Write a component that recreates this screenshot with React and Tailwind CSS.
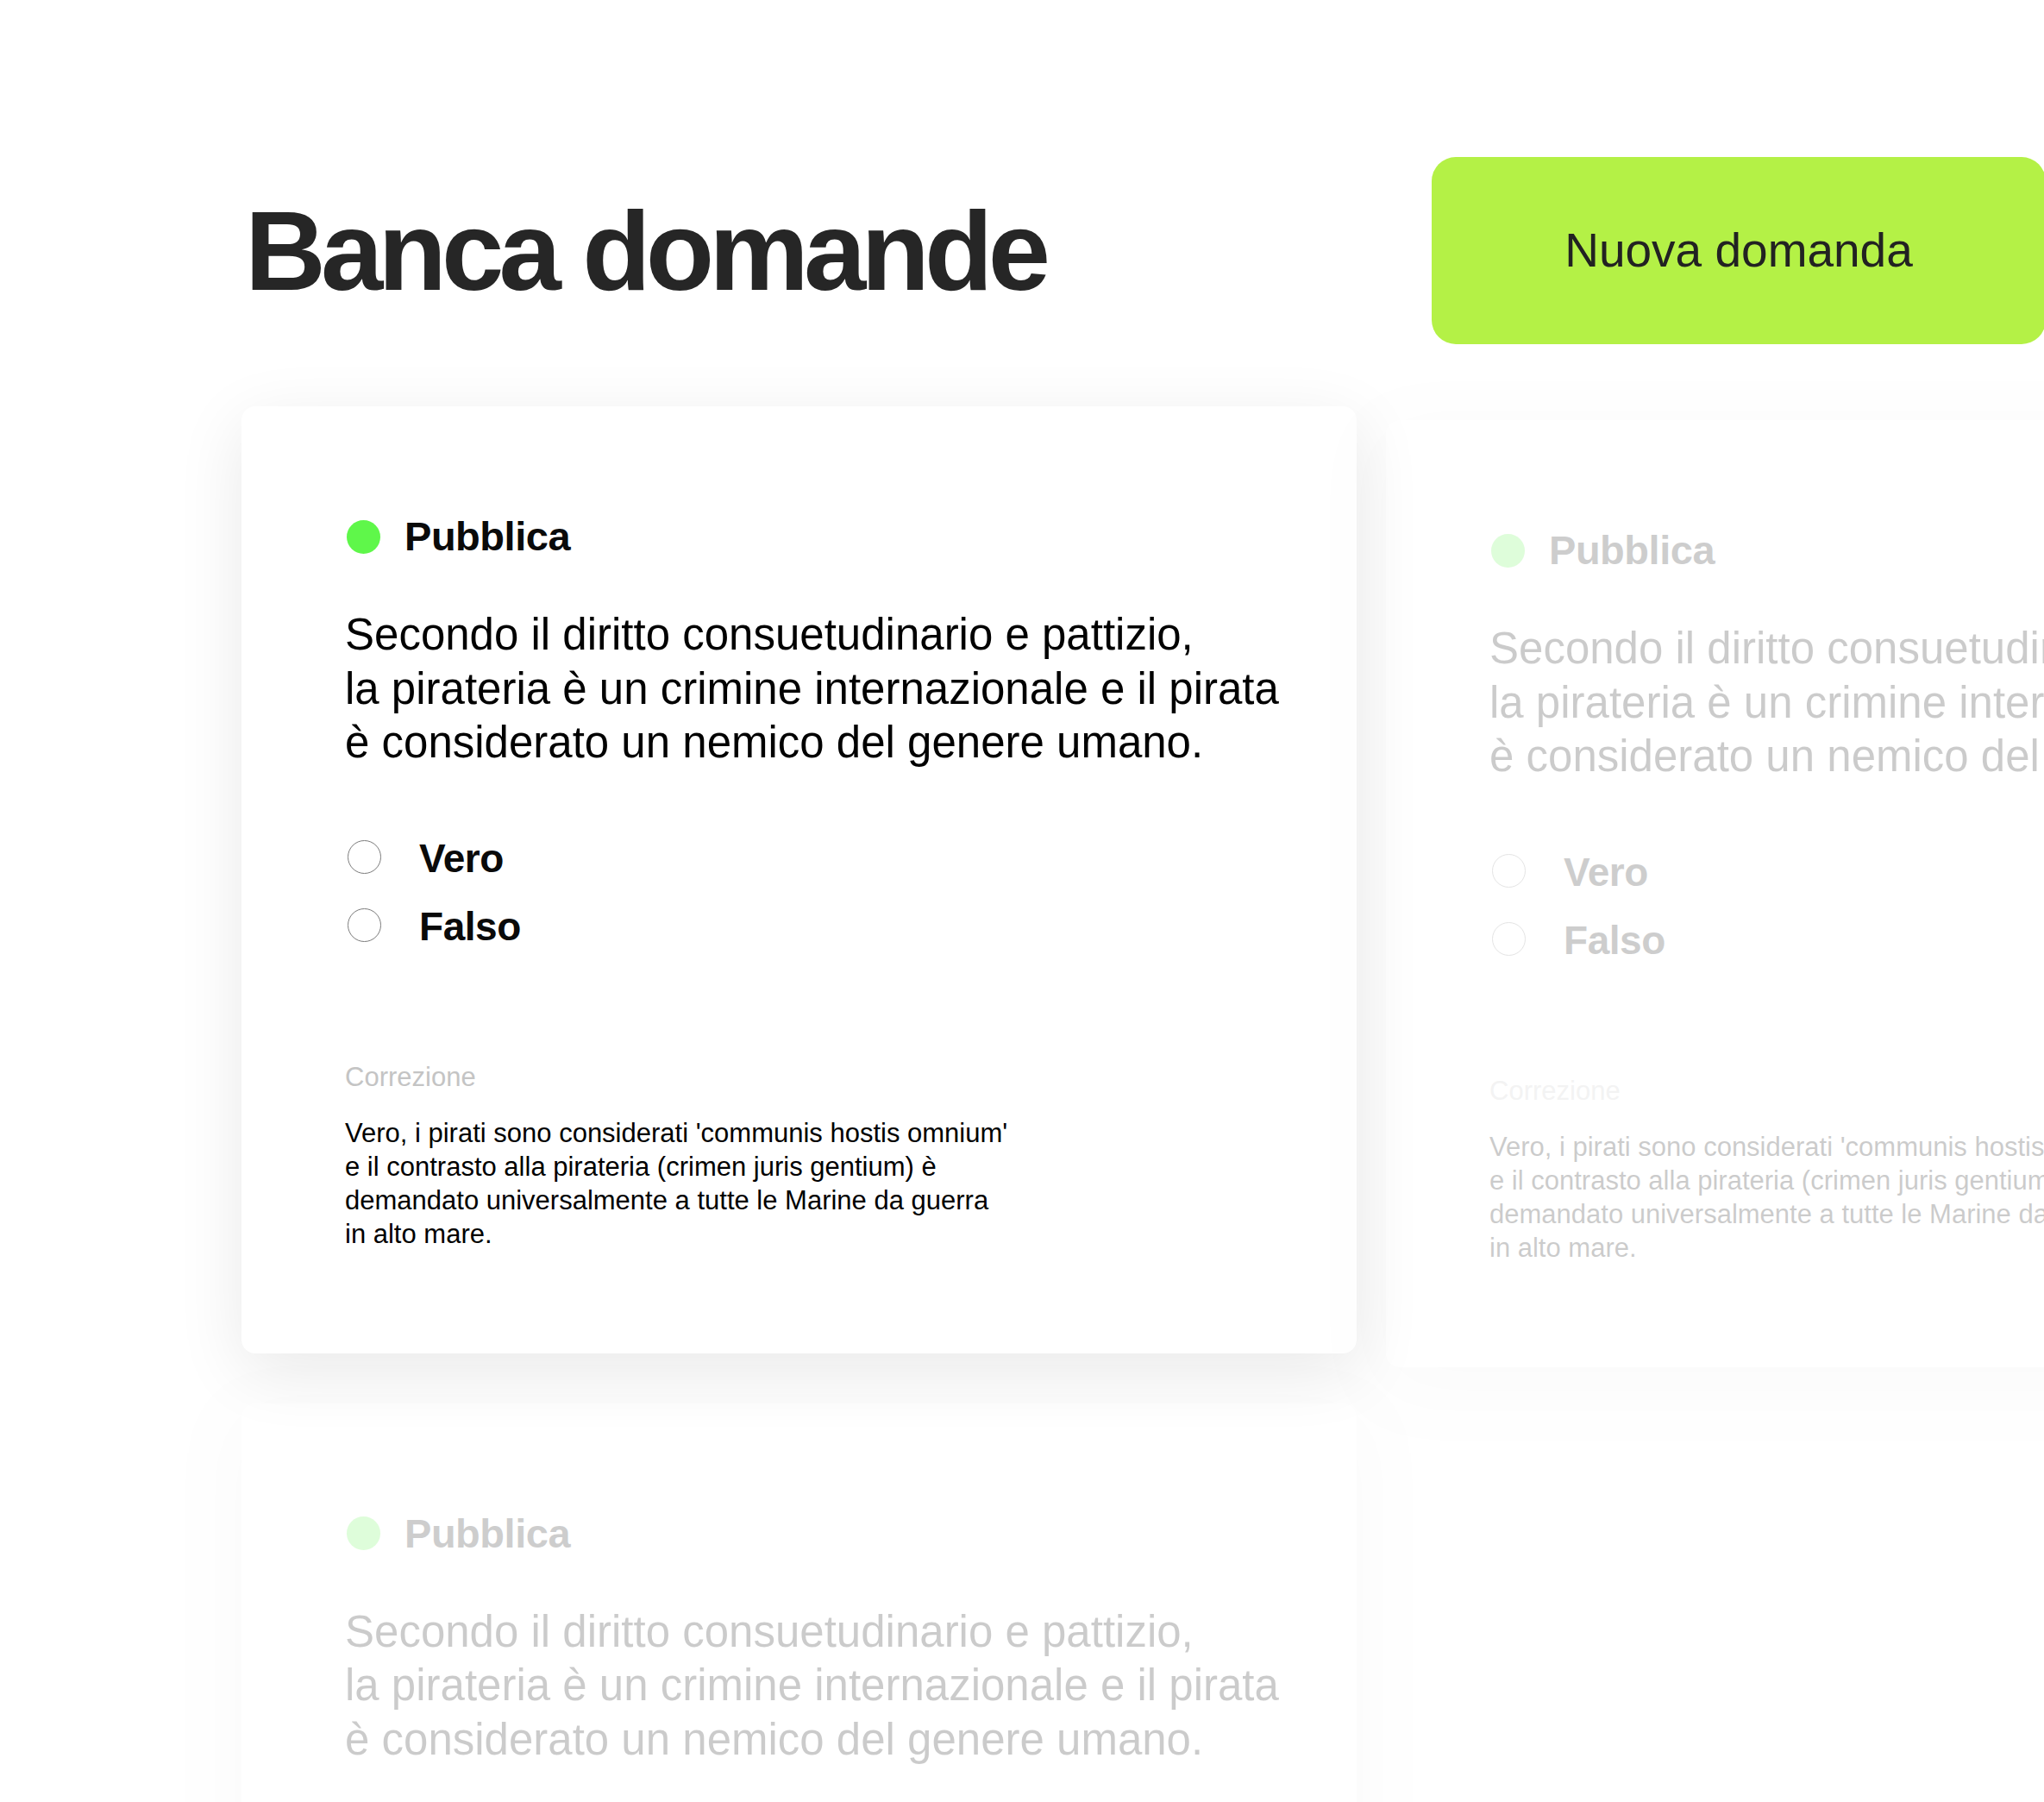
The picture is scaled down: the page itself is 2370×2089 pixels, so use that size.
import React from 'react'

const font = { fontFamily: '"Liberation Sans", Arial, sans-serif' }

function Radio({ label }) {
  return (
    <div className="flex items-center h-[40px]">
      <span className="ml-[3px] w-[39px] h-[39px] rounded-full border-[1.5px] border-[#7c7c7c] shrink-0" />
      <span className="ml-[44px] text-[46px] leading-[40px] font-bold tracking-[-0.01em] text-[#0a0a0a] pt-[2px]">{label}</span>
    </div>
  )
}

function QuestionCard({ faded }) {
  return (
    <div className={`w-[1293px] shrink-0 rounded-[16px] bg-white shadow-[0_20px_80px_rgba(0,0,0,0.09)] ${faded ? 'opacity-20' : ''}`}>
      <div className="pl-[120px] pt-[127px] pb-[119px]">
        {/* stato */}
        <div className="flex items-center h-[48px]">
          <span className="ml-[2px] w-[39px] h-[39px] rounded-full bg-[#5ff74a]" />
          <span className="ml-[28px] text-[47px] leading-[48px] font-bold tracking-[-0.01em] text-[#0a0a0a]">Pubblica</span>
        </div>

        <p className="mt-[59px] text-[51px] leading-[62.5px] text-black">
          Secondo il diritto consuetudinario e pattizio,
          <br />
          la pirateria è un crimine internazionale e il pirata
          <br />
          è considerato un nemico del genere umano.
        </p>

        <div className="mt-[81px] flex flex-col gap-[39px]">
          <Radio label="Vero" />
          <Radio label="Falso" />
        </div>

        <div className="mt-[138px] text-[31px] leading-[36px] text-[#c4c4c4]">Correzione</div>
        <p className="mt-[27px] text-[31px] leading-[39px] text-black">
          Vero, i pirati sono considerati 'communis hostis omnium'
          <br />
          e il contrasto alla pirateria (crimen juris gentium) è
          <br />
          demandato universalmente a tutte le Marine da guerra
          <br />
          in alto mare.
        </p>
      </div>
    </div>
  )
}

export default function App() {
  return (
    <div className="w-full h-[2089px] overflow-hidden bg-white" style={font}>
      {/* header */}
      <div className="flex items-center pt-[182px] pl-[280px]">
        <div className="w-[1380px] shrink-0 pl-[4px]">
          <h1 className="text-[130px] leading-[130px] font-bold tracking-[-0.045em] text-[#262626]">Banca domande</h1>
        </div>
        <button className="w-[712px] h-[217px] shrink-0 rounded-[28px] bg-[#b4f146] text-[55px] text-[#222222]">
          Nuova domanda
        </button>
      </div>

      {/* griglia domande */}
      <div className="mt-[72px] pl-[280px] flex gap-[34px]">
        <div className="flex flex-col gap-[58px] shrink-0">
          <QuestionCard />
          <QuestionCard faded />
        </div>
        <div className="pt-[16px] shrink-0">
          <QuestionCard faded />
        </div>
      </div>
    </div>
  )
}
